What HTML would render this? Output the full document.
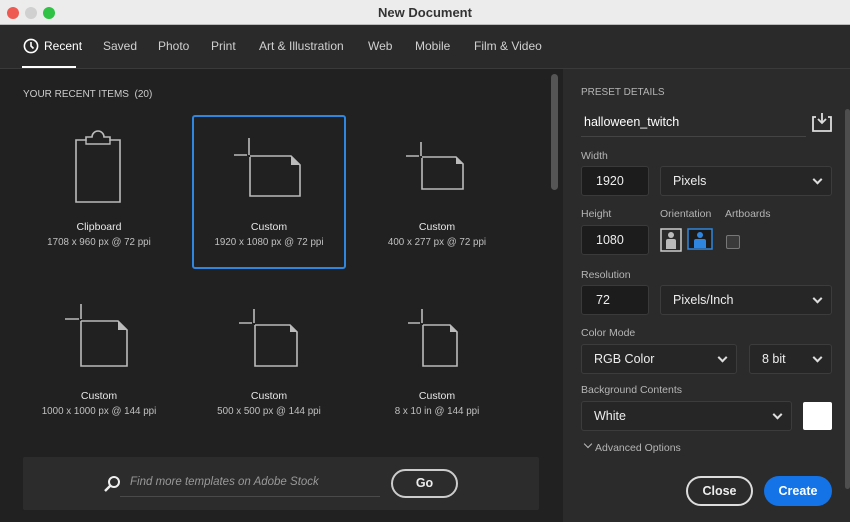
<!DOCTYPE html>
<html><head><meta charset="utf-8"><style>
*{margin:0;padding:0;box-sizing:border-box}
body{width:850px;height:522px;overflow:hidden;background:#212121;font-family:"Liberation Sans",sans-serif;position:relative;color:#ddd}
.abs{position:absolute}
.title{left:0;top:0;width:850px;height:25px;background:#ececec;border-bottom:1px solid #bbb}
.tabs{left:0;top:25px;width:850px;height:44px;background:#2a2a2a;border-bottom:1px solid #3a3a3a}
.tab{position:absolute;top:14px;font-size:12px;color:#d0d0d0}
.card{position:absolute;width:154px;height:154px;text-align:center}
.card .n{position:absolute;left:0;right:0;top:106px;font-size:10.5px;color:#e8e8e8}
.card .d{position:absolute;left:0;right:0;top:122px;font-size:9.8px;color:#c0c0c0}
.card svg{position:absolute;left:0;top:0}
.right{left:563px;top:69px;width:287px;height:453px;background:#2b2b2b}
.lbl{position:absolute;font-size:10.5px;color:#b5b5b5}
.box{position:absolute;border:1px solid #3c3c3c;border-radius:3px;background:#262626;font-size:12.5px;color:#eee;padding-left:12px;display:flex;align-items:center}
.inp{background:#1c1c1c;border-color:#3a3a3a}
.chev{position:absolute;right:10px;top:50%;width:7px;height:7px;border-right:2px solid #ddd;border-bottom:2px solid #ddd;transform:translateY(-70%) rotate(45deg)}
</style></head><body>
<div class="abs title">
 <div class="abs" style="left:7px;top:7px;width:12px;height:12px;border-radius:50%;background:#ee5a52"></div>
 <div class="abs" style="left:25px;top:7px;width:12px;height:12px;border-radius:50%;background:#d0d0d0"></div>
 <div class="abs" style="left:43px;top:7px;width:12px;height:12px;border-radius:50%;background:#2fc244"></div>
 <div class="abs" style="left:0;width:850px;top:5px;text-align:center;font-size:13px;font-weight:bold;color:#333">New Document</div>
</div>
<div class="abs tabs">
 <svg class="abs" style="left:23px;top:13px" width="16" height="16"><circle cx="8" cy="8" r="6.6" fill="none" stroke="#fff" stroke-width="1.6"/><path d="M8 4v4l2.5 2.5" fill="none" stroke="#fff" stroke-width="1.6"/></svg>
 <div class="tab" style="left:44px;color:#fff">Recent</div>
 <div class="abs" style="left:22px;top:41px;width:54px;height:2px;background:#fff"></div>
 <div class="tab" style="left:103px">Saved</div>
 <div class="tab" style="left:158px">Photo</div>
 <div class="tab" style="left:211px">Print</div>
 <div class="tab" style="left:259px">Art &amp; Illustration</div>
 <div class="tab" style="left:368px">Web</div>
 <div class="tab" style="left:415px">Mobile</div>
 <div class="tab" style="left:474px">Film &amp; Video</div>
</div>
<div class="abs" style="left:23px;top:89px;font-size:10px;color:#ccc">YOUR RECENT ITEMS&nbsp; (20)</div>
<div class="abs" style="left:551px;top:74px;width:7px;height:116px;border-radius:4px;background:#555"></div>

<div class="card" style="left:22px;top:115px">
 <svg width="154" height="110"><path d="M54 25h10v-3h6a6 6 0 0 1 12 0h6v3h10v62H54z" fill="none" stroke="#bbb" stroke-width="1.6"/><path d="M64 25v4h24v-4" fill="none" stroke="#bbb" stroke-width="1.4"/></svg>
 <div class="n">Clipboard</div><div class="d">1708 x 960 px @ 72 ppi</div>
</div>
<div class="card" style="left:192px;top:115px;border:2px solid #2f86e0;border-radius:3px">
 <svg width="150" height="110" style="left:-2px;top:-2px"><path d="M57 23v17M42 40h13M58 42v39h50V50l-9-9H58" fill="none" stroke="#bbb" stroke-width="1.6"/><path d="M99 41v9h9z" fill="#bbb"/></svg>
 <div class="n" style="top:104px">Custom</div><div class="d" style="top:120px">1920 x 1080 px @ 72 ppi</div>
</div>
<div class="card" style="left:360px;top:115px">
 <svg width="154" height="110"><path d="M61 27v14M46 41h13M62 43v31h41V49l-7-7H62" fill="none" stroke="#bbb" stroke-width="1.6"/><path d="M96 42v7h7z" fill="#bbb"/></svg>
 <div class="n">Custom</div><div class="d">400 x 277 px @ 72 ppi</div>
</div>
<div class="card" style="left:22px;top:284px">
 <svg width="154" height="110"><path d="M59 20v15M43 35h14M59 37v45h46V46l-9-9H59" fill="none" stroke="#bbb" stroke-width="1.6"/><path d="M96 37v9h9z" fill="#bbb"/></svg>
 <div class="n">Custom</div><div class="d">1000 x 1000 px @ 144 ppi</div>
</div>
<div class="card" style="left:192px;top:284px">
 <svg width="154" height="110"><path d="M62 25v14M47 39h13M63 41v41h42V48l-7-7H63" fill="none" stroke="#bbb" stroke-width="1.6"/><path d="M98 41v7h7z" fill="#bbb"/></svg>
 <div class="n">Custom</div><div class="d">500 x 500 px @ 144 ppi</div>
</div>
<div class="card" style="left:360px;top:284px">
 <svg width="154" height="110"><path d="M62 25v14M48 39h12M63 41v41h34V48l-7-7H63" fill="none" stroke="#bbb" stroke-width="1.6"/><path d="M90 41v7h7z" fill="#bbb"/></svg>
 <div class="n">Custom</div><div class="d">8 x 10 in @ 144 ppi</div>
</div>

<div class="abs" style="left:23px;top:457px;width:516px;height:53px;background:#2c2c2c;border-radius:2px">
 <svg class="abs" style="left:80px;top:18px" width="18" height="18"><circle cx="11" cy="7" r="5" fill="none" stroke="#eee" stroke-width="2"/><path d="M7.5 10.5L2 16" stroke="#eee" stroke-width="2.4"/></svg>
 <div class="abs" style="left:107px;top:19px;font-size:11.5px;font-style:italic;color:#999">Find more templates on Adobe Stock</div>
 <div class="abs" style="left:97px;top:39px;width:260px;height:1px;background:#4a4a4a"></div>
 <div class="abs" style="left:368px;top:12px;width:67px;height:29px;border:2px solid #ccc;border-radius:15px;text-align:center;line-height:25px;font-size:12.5px;font-weight:bold;color:#eee">Go</div>
</div>

<div class="abs right">
 <div class="lbl" style="left:18px;top:18px;font-size:10px">PRESET DETAILS</div>
 <div class="abs" style="left:21px;top:46px;font-size:12.5px;color:#fff">halloween_twitch</div>
 <div class="abs" style="left:18px;top:67px;width:225px;height:1px;background:#444"></div>
 <svg class="abs" style="left:248px;top:42px" width="22" height="22"><path d="M5 6H2v14h18V6h-3" fill="none" stroke="#ddd" stroke-width="1.8"/><path d="M11 2v10M7 8l4 4 4-4" fill="none" stroke="#ddd" stroke-width="1.8"/></svg>
 <div class="abs" style="left:282px;top:40px;width:5px;height:380px;border-radius:3px;background:#4e4e4e"></div>
 <div class="lbl" style="left:18px;top:81px">Width</div>
 <div class="box inp" style="left:18px;top:97px;width:68px;height:30px;padding-left:14px">1920</div>
 <div class="box" style="left:97px;top:97px;width:172px;height:30px">Pixels<span class="chev"></span></div>
 <div class="lbl" style="left:18px;top:139px">Height</div>
 <div class="lbl" style="left:97px;top:139px">Orientation</div>
 <div class="lbl" style="left:162px;top:139px">Artboards</div>
 <div class="box inp" style="left:18px;top:156px;width:68px;height:30px;padding-left:14px">1080</div>
 <svg class="abs" style="left:97px;top:159px" width="24" height="24"><rect x="1" y="1" width="20" height="22" fill="#2b2b2b" stroke="#ccc" stroke-width="1.5"/><circle cx="11" cy="7" r="3" fill="#bbb"/><path d="M6 21v-8a2 2 0 0 1 2-2h6a2 2 0 0 1 2 2v8z" fill="#bbb"/></svg>
 <svg class="abs" style="left:124px;top:159px" width="28" height="24"><rect x="1" y="1" width="24" height="20" fill="#1b1b1b" stroke="#2f86e0" stroke-width="1.5"/><circle cx="13" cy="7" r="3" fill="#2f86e0"/><path d="M7 20v-7a2 2 0 0 1 2-2h8a2 2 0 0 1 2 2v7z" fill="#2f86e0"/></svg>
 <div class="abs" style="left:163px;top:166px;width:14px;height:14px;border:1px solid #777;border-radius:2px;background:#3a3a3a"></div>
 <div class="lbl" style="left:18px;top:200px">Resolution</div>
 <div class="box inp" style="left:18px;top:216px;width:68px;height:30px;padding-left:14px">72</div>
 <div class="box" style="left:97px;top:216px;width:172px;height:30px">Pixels/Inch<span class="chev"></span></div>
 <div class="lbl" style="left:18px;top:258px">Color Mode</div>
 <div class="box" style="left:18px;top:275px;width:156px;height:30px">RGB Color<span class="chev"></span></div>
 <div class="box" style="left:186px;top:275px;width:83px;height:30px">8 bit<span class="chev"></span></div>
 <div class="lbl" style="left:18px;top:315px">Background Contents</div>
 <div class="box" style="left:18px;top:332px;width:211px;height:30px">White<span class="chev"></span></div>
 <div class="abs" style="left:240px;top:333px;width:29px;height:28px;background:#fff;border-radius:2px"></div>
 <div class="abs" style="left:22px;top:372px;width:6px;height:6px;border-right:1.5px solid #bbb;border-bottom:1.5px solid #bbb;transform:rotate(45deg)"></div>
 <div class="lbl" style="left:32px;top:373px">Advanced Options</div>
 <div class="abs" style="left:123px;top:407px;width:67px;height:30px;border:2px solid #ddd;border-radius:16px;text-align:center;line-height:26px;font-size:12.5px;font-weight:bold;color:#eee">Close</div>
 <div class="abs" style="left:201px;top:407px;width:68px;height:30px;background:#1473e6;border-radius:16px;text-align:center;line-height:30px;font-size:12.5px;font-weight:bold;color:#fff">Create</div>
</div>
</body></html>
